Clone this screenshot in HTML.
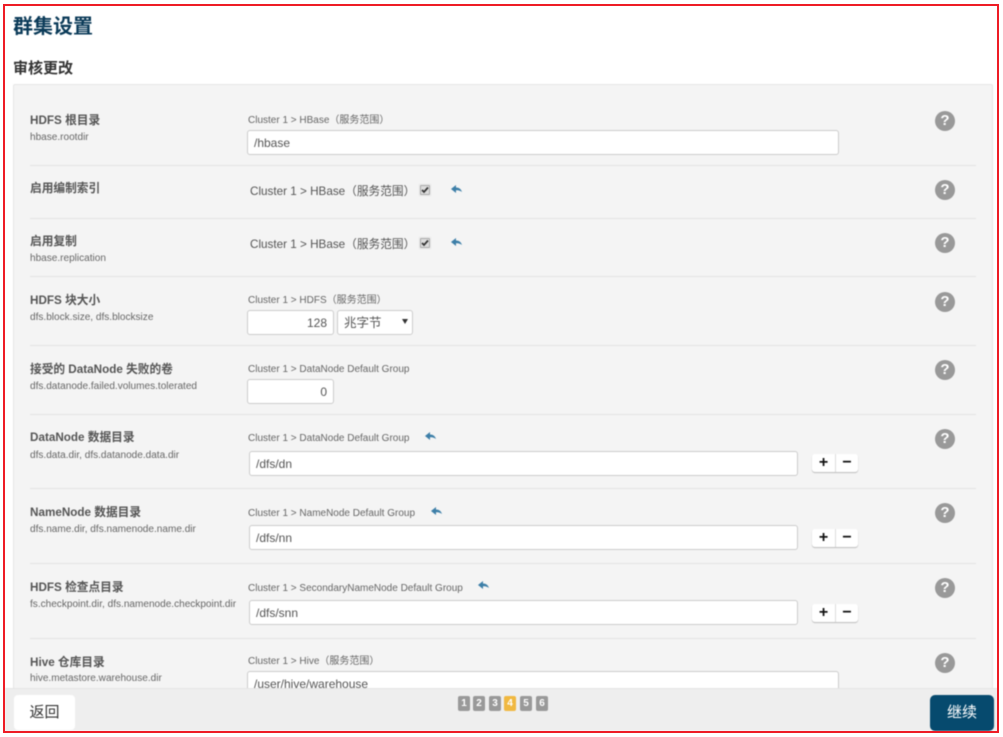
<!DOCTYPE html>
<html lang="zh"><head><meta charset="utf-8"><title>群集设置</title>
<style>
*{box-sizing:border-box}
html,body{margin:0;padding:0;width:1003px;height:737px;overflow:hidden;background:#fff}
body{font-family:"Liberation Sans","Noto Sans CJK SC",sans-serif;color:#555;position:relative}
#wrap{position:absolute;left:0;top:0;width:1003px;height:737px;overflow:hidden;filter:blur(.45px)}
.a{position:absolute;white-space:nowrap}
.h1{left:13px;top:13px;font-size:20px;line-height:28px;font-weight:700;color:#0a3a58}
.h2{left:13px;top:58px;font-size:15px;line-height:21px;font-weight:700;color:#333}
#panel{position:absolute;left:13px;top:84px;width:980px;height:610px;background:#f4f4f4;border:1px solid #e6e6e6;border-radius:2px}
.sep{position:absolute;left:30px;width:946px;height:1px;background:#e3e3e3}
.l{left:30px;font-size:11.7px;line-height:14px;font-weight:700;color:#555}
.s{left:30px;font-size:10.05px;line-height:12px;color:#666;margin-top:4px}
.c{left:248px;font-size:10px;line-height:13px;color:#666;margin-top:.5px}
.c2{left:250px;font-size:11.7px;line-height:14px;color:#555}
.i{height:25px;background:#fff;border:1px solid #ccc;border-radius:3px;font-size:12px;line-height:24px;padding:0 6px;color:#555}
.q{position:absolute;left:935px;width:20px;height:20px;border-radius:50%;background:#999;color:#fff;font-weight:700;font-size:15px;line-height:20px;text-align:center}
.cb{position:absolute;left:420px;width:10px;height:10px;background:#ddd;border:1px solid #aaa;border-radius:1px;box-shadow:0 0 0 1px #ebebeb,0 0 0 2px #f0f0f0}
.btns{position:absolute;left:812px;width:46px;height:18px;background:#fff;border-radius:3px;box-shadow:0 1px 1px #bbb;font-size:0}
.btns b{position:absolute;top:0;width:23px;height:18px;line-height:17px;text-align:center;font-size:16px;color:#111;font-weight:700}
.btns b+b{left:23px;border-left:1px solid #ddd}
#foot{position:absolute;left:5px;top:688px;width:993px;height:43px;background:#eee;border-top:1px solid #e4e4e4}
.p{position:absolute;top:696px;width:12px;height:15px;border-radius:2px;background:#999;color:#fff;font-size:10px;font-weight:700;line-height:15px;text-align:center}
#back{position:absolute;left:14px;top:695px;width:61px;height:35px;background:#fff;border-radius:4px;font-size:15px;line-height:35px;text-align:center;color:#333}
#next{position:absolute;left:930px;top:695px;width:64px;height:36px;background:#064a6e;border-radius:5px;font-size:15px;line-height:36px;text-align:center;color:#fff}
#frame{position:absolute;left:3px;top:4px;width:996px;height:729px;border:2px solid #ee1c25}
</style></head>
<body><div id="wrap">
<div class="a h1">群集设置</div>
<div class="a h2">审核更改</div>
<div id="panel"></div>

<div class="sep" style="top:165px"></div>
<div class="sep" style="top:218px"></div>
<div class="sep" style="top:276px"></div>
<div class="sep" style="top:345px"></div>
<div class="sep" style="top:414px"></div>
<div class="sep" style="top:488px"></div>
<div class="sep" style="top:563px"></div>
<div class="sep" style="top:638px"></div>

<div class="a l" style="top:114px">HDFS 根目录</div>
<div class="a s" style="top:128px">hbase.rootdir</div>
<div class="a c" style="top:113px">Cluster 1 &gt; HBase（服务范围）</div>
<div class="a i" style="left:247px;top:130px;width:592px">/hbase</div>
<div class="q" style="top:111px">?</div>

<div class="a l" style="top:182px">启用编制索引</div>
<div class="a c2" style="top:185px">Cluster 1 &gt; HBase（服务范围）</div>
<div class="cb" style="top:185px"></div>
<svg class="a" style="left:420px;top:185px" width="10" height="10" viewBox="0 0 10 10"><path d="M2 5l2 2 4-4.500" fill="none" stroke="#333" stroke-width="1.700"/></svg>
<svg class="a" style="left:451px;top:185px" width="11" height="9" viewBox="0 0 11 9"><path d="M0 4L5 0V2.500C8 2.500 10 4 11 7 9 5.500 7.500 5.200 5 5.200V8z" fill="#3d7fa8"/></svg>
<div class="q" style="top:180px">?</div>

<div class="a l" style="top:235px">启用复制</div>
<div class="a s" style="top:249px">hbase.replication</div>
<div class="a c2" style="top:238px">Cluster 1 &gt; HBase（服务范围）</div>
<div class="cb" style="top:238px"></div>
<svg class="a" style="left:420px;top:238px" width="10" height="10" viewBox="0 0 10 10"><path d="M2 5l2 2 4-4.500" fill="none" stroke="#333" stroke-width="1.700"/></svg>
<svg class="a" style="left:451px;top:238px" width="11" height="9" viewBox="0 0 11 9"><path d="M0 4L5 0V2.500C8 2.500 10 4 11 7 9 5.500 7.500 5.200 5 5.200V8z" fill="#3d7fa8"/></svg>
<div class="q" style="top:233px">?</div>

<div class="a l" style="top:294px">HDFS 块大小</div>
<div class="a s" style="top:308px">dfs.block.size, dfs.blocksize</div>
<div class="a c" style="top:293px">Cluster 1 &gt; HDFS（服务范围）</div>
<div class="a i" style="left:247px;top:310px;width:87px;text-align:right">128</div>
<div class="a i" style="left:337px;top:310px;width:76px;font-size:12.500px;line-height:25px">兆字节</div>
<div class="a" style="left:402px;top:319px;width:0;height:0;border:3px solid transparent;border-top:5px solid #333;border-bottom:0"></div>
<div class="q" style="top:292px">?</div>

<div class="a l" style="top:363px">接受的 DataNode 失败的卷</div>
<div class="a s" style="top:377px">dfs.datanode.failed.volumes.tolerated</div>
<div class="a c" style="top:362px">Cluster 1 &gt; DataNode Default Group</div>
<div class="a i" style="left:247px;top:379px;width:87px;text-align:right">0</div>
<div class="q" style="top:360px">?</div>

<div class="a l" style="top:431px">DataNode 数据目录</div>
<div class="a s" style="top:446px">dfs.data.dir, dfs.datanode.data.dir</div>
<div class="a c" style="top:431px">Cluster 1 &gt; DataNode Default Group</div>
<svg class="a" style="left:425px;top:432px" width="11" height="9" viewBox="0 0 11 9"><path d="M0 4L5 0V2.500C8 2.500 10 4 11 7 9 5.500 7.500 5.200 5 5.200V8z" fill="#3d7fa8"/></svg>
<div class="a i" style="left:249px;top:451px;width:549px">/dfs/dn</div>
<div class="btns" style="top:454px"><b style="left:0">+</b><b>−</b></div>
<div class="q" style="top:429px">?</div>

<div class="a l" style="top:506px">NameNode 数据目录</div>
<div class="a s" style="top:520px">dfs.name.dir, dfs.namenode.name.dir</div>
<div class="a c" style="top:506px">Cluster 1 &gt; NameNode Default Group</div>
<svg class="a" style="left:431px;top:507px" width="11" height="9" viewBox="0 0 11 9"><path d="M0 4L5 0V2.500C8 2.500 10 4 11 7 9 5.500 7.500 5.200 5 5.200V8z" fill="#3d7fa8"/></svg>
<div class="a i" style="left:249px;top:525px;width:549px">/dfs/nn</div>
<div class="btns" style="top:529px"><b style="left:0">+</b><b>−</b></div>
<div class="q" style="top:503px">?</div>

<div class="a l" style="top:581px">HDFS 检查点目录</div>
<div class="a s" style="top:595px">fs.checkpoint.dir, dfs.namenode.checkpoint.dir</div>
<div class="a c" style="top:581px">Cluster 1 &gt; SecondaryNameNode Default Group</div>
<svg class="a" style="left:478px;top:581px" width="11" height="9" viewBox="0 0 11 9"><path d="M0 4L5 0V2.500C8 2.500 10 4 11 7 9 5.500 7.500 5.200 5 5.200V8z" fill="#3d7fa8"/></svg>
<div class="a i" style="left:249px;top:600px;width:549px">/dfs/snn</div>
<div class="btns" style="top:604px"><b style="left:0">+</b><b>−</b></div>
<div class="q" style="top:578px">?</div>

<div class="a l" style="top:656px">Hive 仓库目录</div>
<div class="a s" style="top:669px">hive.metastore.warehouse.dir</div>
<div class="a c" style="top:654px">Cluster 1 &gt; Hive（服务范围）</div>
<div class="a i" style="left:247px;top:671px;width:592px">/user/hive/warehouse</div>
<div class="q" style="top:653px">?</div>

<div id="foot"></div>
<div class="p" style="left:458px">1</div>
<div class="p" style="left:473px">2</div>
<div class="p" style="left:489px">3</div>
<div class="p" style="left:504px;background:#f0b840">4</div>
<div class="p" style="left:520px">5</div>
<div class="p" style="left:536px">6</div>
<div id="back">返回</div>
<div id="next">继续</div>
</div>
<div id="frame"></div>
</body></html>
